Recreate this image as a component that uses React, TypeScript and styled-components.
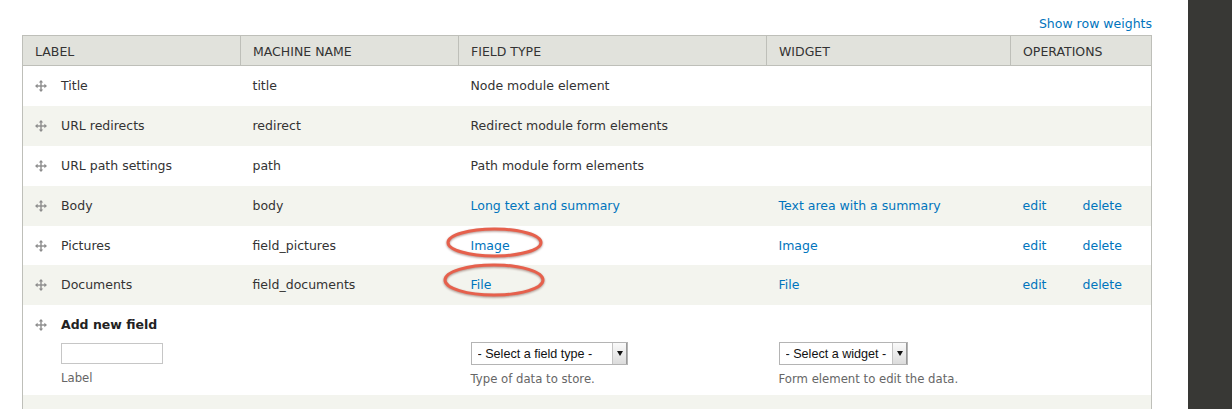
import * as React from 'react';
import styled, {createGlobalStyle} from 'styled-components';

const GlobalStyle = createGlobalStyle`
  html, body {
    margin: 0;
    padding: 0;
    background: #fff;
    overflow: hidden;
  }
  body {
    font-family: "DejaVu Sans", "Open Sans", sans-serif;
    font-size: 12.5px;
    color: #333;
  }
`;

const Page = styled.div`
  display: flex;
  width: 1232px;
  height: 409px;
  overflow: hidden;
`;

const Main = styled.main`
  flex: 1;
  padding: 15px 36px 0 22px;
  min-width: 0;
`;

const Aside = styled.aside`
  width: 44px;
  background: #383835;
`;

const Toolbar = styled.div`
  display: flex;
  justify-content: flex-end;
  margin-bottom: 2px;
`;

const Link = styled.a`
  color: #0074bd;
  text-decoration: none;
  line-height: 18px;
  cursor: pointer;
`;

const Table = styled.table`
  width: 100%;
  border-collapse: collapse;
  table-layout: fixed;
  border: 1px solid #bebfb9;
`;

const Th = styled.th`
  background: #e1e2dc;
  height: 28px;
  padding: 1px 12px 0;
  text-align: left;
  font-weight: normal;
  text-transform: uppercase;
  border-left: 1px solid #bebfb9;
  border-bottom: 1px solid #bebfb9;
  white-space: nowrap;
  &:first-child {
    border-left: 0;
  }
`;

const Tr = styled.tr<{$odd?: boolean}>`
  background: ${({$odd}) => ($odd ? '#f3f4ee' : '#fff')};
`;

const Td = styled.td<{$top?: boolean; $h?: number}>`
  height: ${({$top, $h}) => ($top ? 'auto' : `${$h ?? 40}px`)};
  padding: ${({$top}) => ($top ? '12px 12px 8px' : '0 12px')};
  vertical-align: ${({$top}) => ($top ? 'top' : 'middle')};
  line-height: 16px;
  white-space: nowrap;
`;

const LabelCell = styled.div`
  display: flex;
  align-items: center;
  gap: 14px;
`;

const Handle = styled.svg`
  width: 12px;
  height: 12px;
  flex: none;
`;

const Strong = styled.span`
  font-weight: bold;
  color: #222;
`;

const Indent = styled.div`
  padding-left: 26px;
  display: flex;
  flex-direction: column;
  align-items: flex-start;
`;

const TextInput = styled.input`
  box-sizing: border-box;
  width: 102px;
  height: 21px;
  margin: 10px 0 6px;
  border: 1px solid #c6c6c6;
  background: #fff;
  padding: 0 4px;
  font: inherit;
`;

const Description = styled.div`
  font-size: 11.7px;
  color: #666;
  line-height: 16px;
`;

const FormItem = styled.div`
  padding-top: 25px;
  display: flex;
  flex-direction: column;
  align-items: flex-start;
`;

const SelectWrap = styled.div<{$width: number}>`
  position: relative;
  width: ${({$width}) => $width}px;
  height: 23px;
  margin-bottom: 6px;
`;

const Select = styled.select`
  appearance: none;
  -webkit-appearance: none;
  box-sizing: border-box;
  width: 100%;
  height: 100%;
  margin: 0;
  padding: 0 15px 0 6px;
  border: 1px solid #b4b4b4;
  border-radius: 0;
  background: #fff;
  font-family: "Liberation Sans", Arial, sans-serif;
  font-size: 12.6px;
  color: #111;
`;

const SelectButton = styled.span`
  position: absolute;
  top: 1px;
  right: 1px;
  bottom: 1px;
  width: 14px;
  border-left: 1px solid #c4c4c4;
  background: linear-gradient(#fafafa, #dcdcdc);
  box-shadow: inset -1px 0 0 #9a9a9a;
  display: flex;
  align-items: center;
  justify-content: center;
  pointer-events: none;
  &::after {
    content: '';
    border-left: 3.5px solid transparent;
    border-right: 3.5px solid transparent;
    border-top: 5px solid #111;
  }
`;

const Circled = styled.span`
  position: relative;
  display: inline-block;
`;

const Ring = styled.svg<{$left: number; $top: number}>`
  position: absolute;
  left: ${({$left}) => $left}px;
  top: ${({$top}) => $top}px;
  overflow: visible;
  pointer-events: none;
  filter: drop-shadow(0 1px 1px rgba(80, 20, 10, 0.45));
`;

const DragHandle = () => (
  <Handle viewBox="0 0 12 12">
    <g fill="#8c8c8c">
      <rect x="5.3" y="2" width="1.4" height="8" />
      <rect x="2" y="5.3" width="8" height="1.4" />
      <path d="M6 0 L8.2 2.6 H3.8 Z" />
      <path d="M6 12 L8.2 9.4 H3.8 Z" />
      <path d="M0 6 L2.6 3.8 V8.2 Z" />
      <path d="M12 6 L9.4 3.8 V8.2 Z" />
    </g>
  </Handle>
);

const Annotated = ({
  children,
  left,
  top,
  width,
  height
}: {
  children: React.ReactNode;
  left: number;
  top: number;
  width: number;
  height: number;
}) => (
  <Circled>
    {children}
    <Ring $left={left} $top={top} width={width} height={height}>
      <ellipse
        cx={width / 2}
        cy={height / 2}
        rx={width / 2 - 2}
        ry={height / 2 - 2}
        fill="none"
        stroke="#e6604c"
        strokeWidth="3"
      />
    </Ring>
  </Circled>
);

type Field = {
  label: string;
  machine: string;
  type: React.ReactNode;
  widget?: string;
  ops?: boolean;
  h?: number;
};

const fields: Field[] = [
  {label: 'Title', machine: 'title', type: 'Node module element'},
  {label: 'URL redirects', machine: 'redirect', type: 'Redirect module form elements'},
  {label: 'URL path settings', machine: 'path', type: 'Path module form elements'},
  {
    label: 'Body',
    machine: 'body',
    type: <Link>Long text and summary</Link>,
    widget: 'Text area with a summary',
    ops: true
  },
  {
    label: 'Pictures',
    machine: 'field_pictures',
    type: (
      <Annotated left={-25} top={-10} width={97} height={31}>
        <Link>Image</Link>
      </Annotated>
    ),
    widget: 'Image',
    ops: true,
    h: 39
  },
  {
    label: 'Documents',
    machine: 'field_documents',
    type: (
      <Annotated left={-28} top={-13} width={102} height={34}>
        <Link>File</Link>
      </Annotated>
    ),
    widget: 'File',
    ops: true
  }
];

export default function App() {
  return (
    <>
      <GlobalStyle />
      <Page>
        <Main>
          <Toolbar>
            <Link>Show row weights</Link>
          </Toolbar>
          <Table>
            <colgroup>
              <col style={{width: 218}} />
              <col style={{width: 218}} />
              <col style={{width: 308}} />
              <col style={{width: 244}} />
              <col style={{width: 60}} />
              <col />
            </colgroup>
            <thead>
              <tr>
                <Th>Label</Th>
                <Th>Machine name</Th>
                <Th>Field type</Th>
                <Th>Widget</Th>
                <Th colSpan={2}>Operations</Th>
              </tr>
            </thead>
            <tbody>
              {fields.map((f, i) => (
                <Tr key={f.machine} $odd={i % 2 === 1}>
                  <Td $h={f.h}>
                    <LabelCell>
                      <DragHandle />
                      {f.label}
                    </LabelCell>
                  </Td>
                  <Td $h={f.h}>{f.machine}</Td>
                  <Td $h={f.h}>{f.type}</Td>
                  <Td $h={f.h}>{f.widget && <Link>{f.widget}</Link>}</Td>
                  <Td $h={f.h}>{f.ops && <Link>edit</Link>}</Td>
                  <Td $h={f.h}>{f.ops && <Link>delete</Link>}</Td>
                </Tr>
              ))}
              <Tr>
                <Td $top>
                  <LabelCell>
                    <DragHandle />
                    <Strong>Add new field</Strong>
                  </LabelCell>
                  <Indent>
                    <TextInput type="text" />
                    <Description>Label</Description>
                  </Indent>
                </Td>
                <Td $top />
                <Td $top>
                  <FormItem>
                    <SelectWrap $width={157}>
                      <Select defaultValue="">
                        <option value="">- Select a field type -</option>
                      </Select>
                      <SelectButton />
                    </SelectWrap>
                    <Description>Type of data to store.</Description>
                  </FormItem>
                </Td>
                <Td $top>
                  <FormItem>
                    <SelectWrap $width={129}>
                      <Select defaultValue="">
                        <option value="">- Select a widget -</option>
                      </Select>
                      <SelectButton />
                    </SelectWrap>
                    <Description>Form element to edit the data.</Description>
                  </FormItem>
                </Td>
                <Td $top colSpan={2} />
              </Tr>
              <Tr $odd>
                <Td $top>
                  <LabelCell>
                    <DragHandle />
                    <Strong>Add existing field</Strong>
                  </LabelCell>
                </Td>
                <Td $top />
                <Td $top />
                <Td $top />
                <Td $top colSpan={2} />
              </Tr>
            </tbody>
          </Table>
        </Main>
        <Aside />
      </Page>
    </>
  );
}
